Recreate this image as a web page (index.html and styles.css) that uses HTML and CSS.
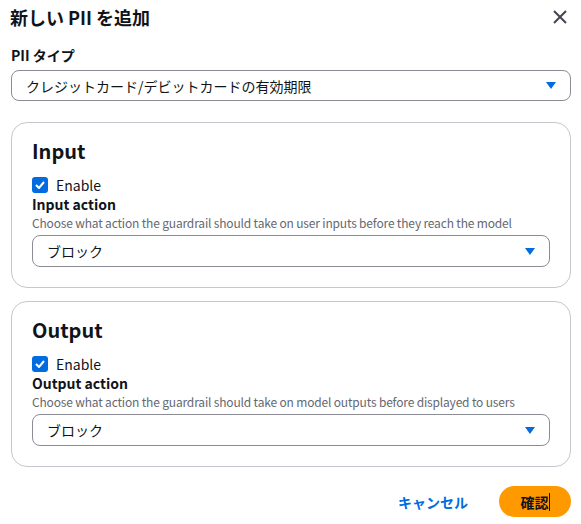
FILE: index.html
```html
<!DOCTYPE html>
<html lang="ja">
<head>
<meta charset="utf-8">
<link rel="stylesheet" href="styles.css">
</head>
<body>
<div class="modal">
  <div class="header">
    <h1 class="title">新しい PII を追加</h1>
    <button class="close" aria-label="閉じる">
      <svg width="16" height="16" viewBox="0 0 16 16"><path d="M2 2 L14 14 M14 2 L2 14" stroke="#424650" stroke-width="2" fill="none"/></svg>
    </button>
  </div>
  <div class="field">
    <div class="label">PII タイプ</div>
    <div class="select wide">
      <span>クレジットカード/デビットカードの有効期限</span>
      <svg class="caret" width="10" height="7" viewBox="0 0 10 7"><path d="M0 0 H10 L5 7 Z" fill="#006ce0"/></svg>
    </div>
  </div>
  <div class="box">
    <h2 class="box-title">Input</h2>
    <label class="check"><span class="cb"><svg width="10" height="8" viewBox="0 0 10 8"><path d="M1 4 L4 7 L9 1" stroke="#fff" stroke-width="2" fill="none"/></svg></span>Enable</label>
    <div class="label small">Input action</div>
    <div class="desc">Choose what action the guardrail should take on user inputs before they reach the model</div>
    <div class="select">
      <span>ブロック</span>
      <svg class="caret" width="10" height="7" viewBox="0 0 10 7"><path d="M0 0 H10 L5 7 Z" fill="#006ce0"/></svg>
    </div>
  </div>
  <div class="box">
    <h2 class="box-title">Output</h2>
    <label class="check"><span class="cb"><svg width="10" height="8" viewBox="0 0 10 8"><path d="M1 4 L4 7 L9 1" stroke="#fff" stroke-width="2" fill="none"/></svg></span>Enable</label>
    <div class="label small">Output action</div>
    <div class="desc">Choose what action the guardrail should take on model outputs before displayed to users</div>
    <div class="select">
      <span>ブロック</span>
      <svg class="caret" width="10" height="7" viewBox="0 0 10 7"><path d="M0 0 H10 L5 7 Z" fill="#006ce0"/></svg>
    </div>
  </div>
  <div class="footer">
    <button class="link-btn">キャンセル</button>
    <button class="primary">確認<span class="cursor"></span></button>
  </div>
</div>
</body>
</html>
```
FILE: styles.css
```css
* { box-sizing: border-box; }
html, body { margin: 0; padding: 0; background: #fff; }
body {
  font-family: "Noto Sans CJK JP", "Open Sans", sans-serif;
  color: #0f141a;
  font-size: 14px;
}
.modal {
  width: 581px;
  padding: 0 10px 0 11px;
  display: flex;
  flex-direction: column;
}
.header {
  display: flex;
  justify-content: space-between;
  align-items: center;
  height: 34px;
}
.title {
  margin: 0;
  font-size: 18px;
  font-weight: 700;
  line-height: 22px;
  margin-left: -1px;
}
.close {
  border: 0;
  background: none;
  padding: 0;
  width: 16px;
  height: 16px;
  margin-right: 3px;
  display: flex;
}
.field { margin-top: 11px; }
.label {
  font-weight: 700;
  font-size: 14px;
  line-height: 20px;
}
.select {
  height: 32px;
  border: 1px solid #8c8c94;
  border-radius: 8px;
  display: flex;
  align-items: center;
  justify-content: space-between;
  padding: 0 14px 0 14px;
  font-size: 14px;
}
.wide { margin-top: 5px; height: 31px; }
.caret { flex: none; }
.box {
  margin-top: 21px;
  border: 1px solid #c6c6cd;
  border-radius: 16px;
  padding: 14px 20px 20px 20px;
  display: flex;
  flex-direction: column;
}
.box + .box { margin-top: 13px; }
.box-title {
  margin: 0;
  font-size: 20px;
  line-height: 27px;
  font-weight: 700;
}
.check {
  display: flex;
  align-items: center;
  gap: 8px;
  margin-top: 12px;
  height: 18px;
  font-size: 14px;
}
.cb {
  width: 16px;
  height: 16px;
  border-radius: 3px;
  background: #006ce0;
  display: flex;
  align-items: center;
  justify-content: center;
}
.small { margin-top: 0; }
.desc {
  margin-top: 1px;
  font-size: 12px;
  line-height: 16px;
  color: #656871;
  letter-spacing: -0.17px;
}
.box .select { margin-top: 4px; }
.footer {
  display: flex;
  justify-content: flex-end;
  align-items: center;
  gap: 31px;
  margin-top: 19px;
}
.link-btn {
  border: 0;
  background: none;
  color: #006ce0;
  font-family: inherit;
  font-weight: 700;
  font-size: 14px;
  padding: 0;
}
.primary {
  border: 0;
  background: #ff9900;
  color: #0f141a;
  border-radius: 16px;
  width: 72px;
  height: 31px;
  font-family: inherit;
  font-weight: 700;
  font-size: 14px;
  display: flex;
  align-items: center;
  justify-content: center;
}
.cursor {
  display: inline-block;
  width: 1px;
  height: 18px;
  background: #0f141a;
}
```
